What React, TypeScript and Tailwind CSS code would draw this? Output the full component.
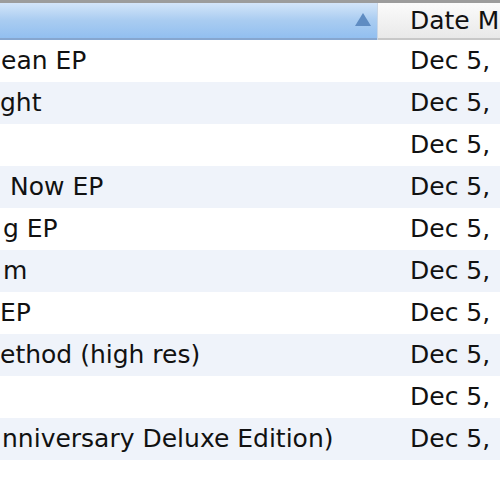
const ROWS = [
  { title: "ean EP", pad: "pl-[1px]" },
  { title: "ght", pad: "pl-0" },
  { title: "", pad: "pl-0" },
  { title: "Now EP", pad: "pl-[10px]" },
  { title: "g EP", pad: "pl-[3px]" },
  { title: "m", pad: "pl-[3px]" },
  { title: "EP", pad: "pl-0" },
  { title: "ethod (high res)", pad: "pl-0" },
  { title: "", pad: "pl-0" },
  { title: "nniversary Deluxe Edition)", pad: "pl-[2px]" },
  { title: "", pad: "pl-0" },
];

export default function App() {
  return (
    <div
      className="h-[500px] w-[500px] overflow-hidden bg-white text-[25px] text-[#111]"
      style={{ fontFamily: '"DejaVu Sans", "Liberation Sans", sans-serif' }}
    >
      {/* Column headers */}
      <div className="flex h-[40px] border-t-[3px] border-[#9c9c9c]">
        <div className="flex w-[377px] shrink-0 items-center justify-end border-b-2 border-[#86a6cf] bg-gradient-to-b from-[#d3e5f9] via-[#a9ccf1] to-[#92bff0] pr-[6px]">
          <svg width="16" height="13" viewBox="0 0 16 13" className="mb-[2px]">
            <polygon points="8,0 16,13 0,13" fill="#5f8cc2" />
          </svg>
        </div>
        <div className="w-px shrink-0 bg-[#c9d6e6]" />
        <div className="flex min-w-0 flex-1 items-center overflow-hidden border-b-2 border-[#c8c8c8] bg-gradient-to-b from-[#fbfbfb] to-[#e9e9e9] pl-[32px]">
          <span className="whitespace-nowrap leading-none">Date M</span>
        </div>
      </div>

      {/* Rows */}
      {ROWS.map((r, i) => (
        <div
          key={i}
          className={`flex h-[42px] items-center ${i % 2 === 1 ? "bg-[#eff3fa]" : "bg-white"}`}
        >
          <div className={`w-[377px] shrink-0 overflow-hidden whitespace-nowrap ${r.pad}`}>{r.title}</div>
          <div className="min-w-0 flex-1 overflow-hidden whitespace-nowrap pl-[33px]">{i < 10 ? "Dec 5," : ""}</div>
        </div>
      ))}
    </div>
  );
}
